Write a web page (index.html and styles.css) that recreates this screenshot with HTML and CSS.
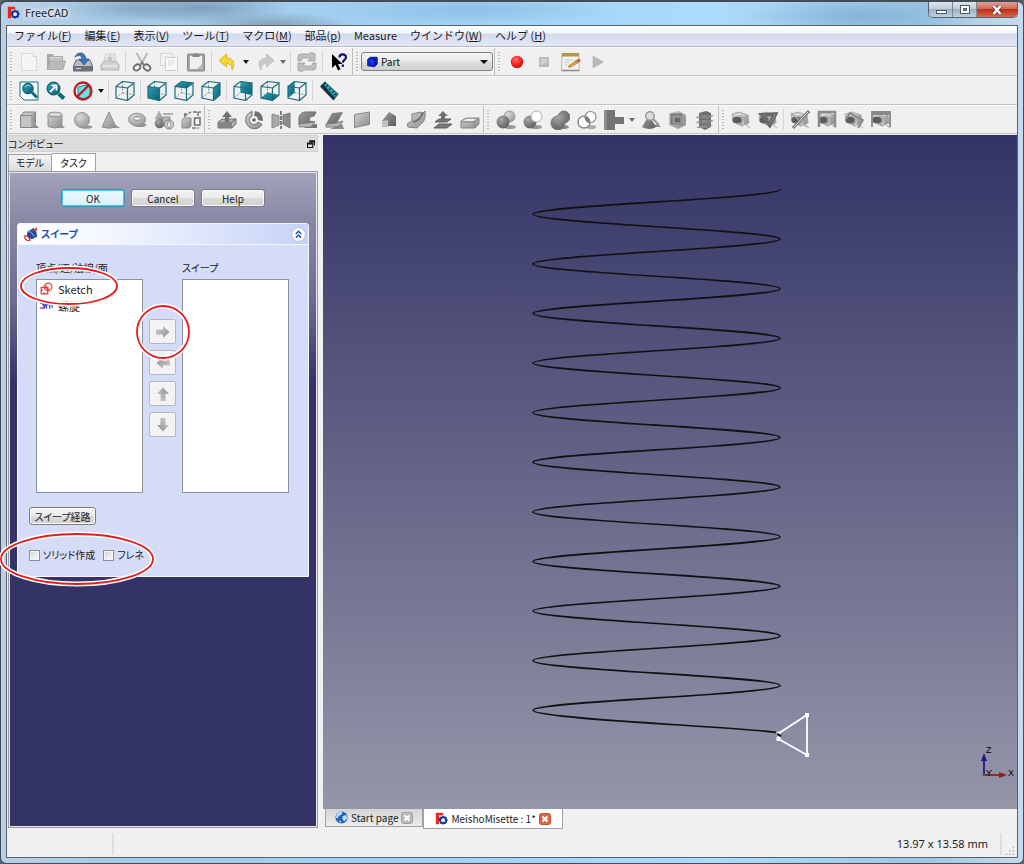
FILE: index.html
```html
<!DOCTYPE html>
<html lang="ja">
<head>
<meta charset="utf-8">
<title>FreeCAD</title>
<link rel="stylesheet" href="styles.css">
</head>
<body>
<svg class="defs" aria-hidden="true">
  <defs>
    <linearGradient id="gy" x1="0" y1="0" x2="1" y2="1"><stop offset="0" stop-color="#d2d2d2"/><stop offset="1" stop-color="#8c8c8c"/></linearGradient>
    <linearGradient id="dk" x1="0" y1="0" x2="1" y2="1"><stop offset="0" stop-color="#9c9c9c"/><stop offset="1" stop-color="#5e5e5e"/></linearGradient>
    <linearGradient id="teal" x1="0" y1="0" x2="1" y2="1"><stop offset="0" stop-color="#2aa0b4"/><stop offset="1" stop-color="#0b6075"/></linearGradient>
    <radialGradient id="ball" cx=".35" cy=".3" r=".8"><stop offset="0" stop-color="#dadada"/><stop offset="1" stop-color="#969696"/></radialGradient>
    <radialGradient id="dball" cx=".35" cy=".3" r=".8"><stop offset="0" stop-color="#a8a8a8"/><stop offset="1" stop-color="#595959"/></radialGradient>
    <radialGradient id="redball" cx=".4" cy=".3" r=".8"><stop offset="0" stop-color="#ff6a6a"/><stop offset=".6" stop-color="#f01818"/><stop offset="1" stop-color="#c40b0b"/></radialGradient>
  </defs>
  <symbol id="logo" viewBox="0 0 16 16"><path d="M1 1h9v3H5v3h3v3H5v5H1z" fill="#ef2518"/><circle cx="10" cy="10" r="3.600" fill="none" stroke="#153c9d" stroke-width="2.600"/><path d="M10 4.500v2M10 13.500v2M4.500 10h2M13.500 10h2M6.100 6.100l1.500 1.500M12.400 12.400l1.500 1.500M13.900 6.100l-1.500 1.500M6.100 13.900l1.500-1.500" stroke="#153c9d" stroke-width="2"/><circle cx="10" cy="10" r="2.100" fill="#e7eefb"/></symbol>
  <symbol id="new" viewBox="0 0 20 20"><path d="M2.500 1.500h12l3 3v14h-15z" fill="#f5f5f5" stroke="#dadada"/><path d="M14.500 1.500v3h3" fill="#fff" stroke="#d0d0d0"/></symbol>
  <symbol id="open" viewBox="0 0 20 20"><path d="M1 17V2h6l1 2h9v13z" fill="#a8a8a8"/><path d="M4 5h12v8H4z" fill="#d8d8d8"/><path d="M5 7h11" stroke="#aaa"/><path d="M1 17.500L3.500 9h16L17 17.500z" fill="#b9b9b9" stroke="#9b9b9b" stroke-width=".7"/></symbol>
  <symbol id="save" viewBox="0 0 20 20"><path d="M3 8h14l2.500 6v5H.5v-5z" fill="#b9bdc4" stroke="#65696f"/><path d="M1 14h18v5H1z" fill="#6d7177"/><path d="M3 16.500h5" stroke="#d5d8dc"/><path d="M2 5C4-.5 12-1 13 7h3l-5 6-5-6h3C9 3.500 6 2.500 2 5z" fill="#3d72b8" stroke="#1e4d8f" stroke-width=".7"/></symbol>
  <symbol id="print" viewBox="0 0 20 20"><path d="M5 2h10v8H5z" fill="#ececec" stroke="#cfcfcf"/><path d="M10 3v5M7.500 5.500L10 8l2.500-2.500" stroke="#bcbcbc" fill="none" stroke-width="1.500"/><path d="M1 13l3-4h12l3 4v5H1z" fill="#d0d0d0" stroke="#b5b5b5"/><path d="M3 14h14" stroke="#eee" stroke-width="1.500"/></symbol>
  <symbol id="cut" viewBox="0 0 20 20"><path d="M4.500 1L12 14M15.500 1L8 14" stroke="#b7b7b7" stroke-width="2"/><ellipse cx="5" cy="15.500" rx="3.600" ry="2.700" fill="none" stroke="#6d6d6d" stroke-width="1.800" transform="rotate(-35 5 15.500)"/><ellipse cx="15" cy="15.500" rx="3.600" ry="2.700" fill="none" stroke="#6d6d6d" stroke-width="1.800" transform="rotate(35 15 15.500)"/><path d="M8 13l2-3 2 3" stroke="#777" fill="none" stroke-width="1.500"/></symbol>
  <symbol id="copy" viewBox="0 0 20 20"><path d="M1.500 1.500h12v12h-12z" fill="#f2f2f2" stroke="#d3d3d3"/><path d="M6.500 5.500h12v13h-12z" fill="#f8f8f8" stroke="#cfcfcf"/><path d="M4 5h6M9 9h7M9 11h7M9 13h5" stroke="#ddd"/></symbol>
  <symbol id="paste" viewBox="0 0 20 20"><rect x="1.500" y="2" width="17" height="17" rx="1" fill="#a6a6a6" stroke="#878787"/><path d="M4 4h12v13H4z" fill="#f0f0f0"/><path d="M6.500 5V2.500h2L10 .5l1.500 2h2V5z" fill="#858585"/><path d="M16 12v5h-5z" fill="#bdbdbd"/></symbol>
  <symbol id="undo" viewBox="0 0 20 20"><path d="M1 8.500L8.500 2v4C15 6 18 11 14 18c0-4-1-6.500-5.500-6.500V15z" fill="#f6d72c" stroke="#cda913" stroke-width=".8"/></symbol>
  <symbol id="redo" viewBox="0 0 20 20"><path d="M19 8.500L11.500 2v4C5 6 2 11 6 18c0-4 1-6.500 5.500-6.500V15z" fill="#c9c9c9" stroke="#b9b9b9" stroke-width=".8"/></symbol>
  <symbol id="refresh" viewBox="0 0 20 20"><path d="M1 9V5q0-3 3-3h8l2-1.500 4 1V9h-7l2.500-3H5.500L4 9zM19 11v4q0 3-3 3H7l-2 1.500-4-1V11h7l-2.500 3h9L16 11z" fill="#bfbfbf" stroke="#9d9d9d" stroke-width=".8"/></symbol>
  <symbol id="whats" viewBox="0 0 20 20"><path d="M3 2v14l3.500-3.200L9 18.500l2.500-1.200L9 12h4.500z" fill="#000"/><path d="M10.500 5.500C10.500 1.500 17 1.500 17 5.200c0 2.800-3.200 2.600-3.200 5.600" fill="none" stroke="#10107e" stroke-width="2.200"/><path d="M12.700 12.500h2.300v2.300h-2.300z" fill="#10107e"/></symbol>
  <symbol id="bluecube" viewBox="0 0 14 14"><path d="M2 4l3-2.500h8v8L10 12.500 2 11.500z" fill="#0a22df" stroke="#04106a"/><path d="M2 4h7.500v8" fill="#1b3cff" stroke="#04106a" stroke-width=".6"/><path d="M9.500 4L13 1.500v8l-3.500 3z" fill="#0717a6"/></symbol>
  <symbol id="rec" viewBox="0 0 20 20"><circle cx="10" cy="10" r="6.200" fill="url(#redball)"/></symbol>
  <symbol id="stop" viewBox="0 0 20 20"><path d="M5 5h10v10H5z" fill="#b9b9b9"/><path d="M6.500 6.500h7v4l-7 3z" fill="#cfcfcf"/></symbol>
  <symbol id="edit" viewBox="0 0 20 20"><path d="M1 2.500h17v16H.5z" fill="#f3f3f1" stroke="#b5b5b0"/><path d="M1 1h17v3.500H1z" fill="#b59a3c"/><path d="M1 18.500h17" stroke="#898989" stroke-width="1.500"/><path d="M3.500 8h8M3.500 10.500h5M3.500 13h3" stroke="#c8c8c8"/><path d="M7 14.500l8-6 2 2.300-8 4.600z" fill="#e4a238" stroke="#99651b" stroke-width=".6"/><path d="M15 8.500l3-2 1.800 2.200L17 10.800z" fill="#d45142"/></symbol>
  <symbol id="play" viewBox="0 0 20 20"><path d="M5 4l10.500 6L5 16z" fill="#bababa" stroke="#aaa" stroke-width=".5"/></symbol>
  <symbol id="fit" viewBox="0 0 20 20"><path d="M1 1h18v18H5l-4-4z" fill="#f5fcfd" stroke="#176f80"/><circle cx="9" cy="7.500" r="5.300" fill="url(#teal)" stroke="#0b5264"/><path d="M13 11.500l5 5" stroke="#106a7c" stroke-width="3"/><path d="M6 6q2-3 5-1" stroke="#9ee1ec" fill="none"/></symbol>
  <symbol id="fitsel" viewBox="0 0 20 20"><circle cx="7.500" cy="7.500" r="6.500" fill="url(#teal)" stroke="#0b5264"/><path d="M12.500 12.500l5.500 5" stroke="#106a7c" stroke-width="4"/><path d="M4 11l5-5M5.500 4.500h5v5" stroke="#fff" fill="none" stroke-width="1.800"/></symbol>
  <symbol id="draw" viewBox="0 0 20 20"><path d="M5 6l8-2 4 3v8l-7 3-5-3z" fill="#6ce1e4" stroke="#1b8d92"/><circle cx="10" cy="10" r="8.500" fill="none" stroke="#bd1c24" stroke-width="2.300"/><path d="M4 16L16 4" stroke="#bd1c24" stroke-width="2.300"/></symbol>
  <symbol id="c-axo" viewBox="0 0 20 20"><g id="wire"><path d="M1 5.500L12.500 7v12.500L1 17zM1 5.500L7.500.5 19 2l-6.500 5M19 2v12l-6.500 5.500" fill="none" stroke="#1d6e7d" stroke-width="1.200"/><path d="M7.500.5v11L1 17M7.500 11.500L19 14" fill="none" stroke="#3c8290" stroke-dasharray="2 1.500" stroke-width=".8"/></g></symbol>
  <symbol id="c-front" viewBox="0 0 20 20"><path d="M1 5.500L12.500 7v12.500L1 17z" fill="url(#teal)"/><use href="#wire"/></symbol>
  <symbol id="c-top" viewBox="0 0 20 20"><path d="M1 5.500L7.500.5 19 2l-6.500 5z" fill="url(#teal)"/><use href="#wire"/></symbol>
  <symbol id="c-right" viewBox="0 0 20 20"><path d="M12.500 7L19 2v12l-6.500 5.500z" fill="url(#teal)"/><use href="#wire"/></symbol>
  <symbol id="c-rear" viewBox="0 0 20 20"><path d="M7.500.5L19 2v12L7.500 11.500z" fill="url(#teal)"/><use href="#wire"/></symbol>
  <symbol id="c-bottom" viewBox="0 0 20 20"><path d="M1 17l6.500-5.500L19 14l-6.500 5.500z" fill="url(#teal)"/><use href="#wire"/></symbol>
  <symbol id="c-left" viewBox="0 0 20 20"><path d="M1 5.500L7.500.5v11L1 17z" fill="url(#teal)"/><use href="#wire"/></symbol>
  <symbol id="ruler" viewBox="0 0 20 20"><path d="M1 5.500L6 .5l13.500 12.500-5 6.500z" fill="#12343c"/><path d="M5 4L7 2l11.500 11-3 3.500z" fill="#27a5b8"/><path d="M7 6l2-2M10 9l2-2M13 12l2-2M15 14.500l2-2" stroke="#0c4450" stroke-width="1.200"/></symbol>
  <symbol id="box" viewBox="0 0 20 20"><path d="M10 18h10l-4-4z" fill="#8b8b8b"/><path d="M1.500 5.500L5 2h11.500v12L13 17.500H1.500z" fill="#c4c4c4" stroke="#858585"/><path d="M1.500 5.500H13v12M13 5.500L16.500 2" fill="none" stroke="#858585"/><path d="M13.500 6l2.500-2.500v10l-2.500 3z" fill="#999"/></symbol>
  <symbol id="cyl" viewBox="0 0 20 20"><path d="M8 18h11l-3-3z" fill="#999"/><path d="M2 4.500v12Q9 19.500 16 16.500v-12" fill="url(#gy)" stroke="#909090"/><ellipse cx="9" cy="4.500" rx="7" ry="2.300" fill="#d8d8d8" stroke="#909090"/></symbol>
  <symbol id="sph" viewBox="0 0 20 20"><ellipse cx="13" cy="17" rx="6.500" ry="1.800" fill="#999"/><circle cx="9" cy="10" r="7.500" fill="url(#ball)" stroke="#949494"/></symbol>
  <symbol id="cone" viewBox="0 0 20 20"><path d="M7 18h13l-4-3z" fill="#949494"/><path d="M9 2L2 17q7 2.500 14 0z" fill="url(#gy)" stroke="#8b8b8b"/></symbol>
  <symbol id="torus" viewBox="0 0 20 20"><ellipse cx="13" cy="15" rx="6.500" ry="2" fill="#909090"/><ellipse cx="10" cy="9.500" rx="8.500" ry="6.300" fill="url(#ball)" stroke="#929292"/><ellipse cx="10" cy="8.500" rx="4" ry="1.900" fill="#efefef" stroke="#8b8b8b"/></symbol>
  <symbol id="prims" viewBox="0 0 20 20"><path d="M5 1L1 9h8z" fill="url(#gy)" stroke="#999" stroke-width=".5"/><path d="M9 4h10" stroke="#999" stroke-width="1.500"/><circle cx="5.500" cy="13.500" r="4.800" fill="url(#dball)"/><path d="M9 7h7v7H9z" fill="url(#gy)" stroke="#888"/><circle cx="15" cy="14.500" r="4.500" fill="#ddd" stroke="#777"/><ellipse cx="15" cy="14.500" rx="2" ry="3" fill="#eee" stroke="#888"/></symbol>
  <symbol id="builder" viewBox="0 0 20 20"><path d="M1 10l2-2h7v8l-2 2H1z" fill="url(#gy)" stroke="#8b8b8b"/><path d="M13.500 8h5.500v7h-5.500z" fill="#f6f6f6" stroke="#6d6d6d" stroke-width="1.500"/><path d="M12 2h8M3 6l7-4M4 3v4M17 2v4M11 18h7" stroke="#777" stroke-width="1.500" stroke-dasharray="4 1.500"/></symbol>
  <symbol id="extrude" viewBox="0 0 20 20"><path d="M1 12l4-3h14v5l-4 4H1z" fill="#b0b0b0" stroke="#707070"/><path d="M1 12h14v6H1z" fill="#858585"/><path d="M15 12l4-3" stroke="#666"/><path d="M8 12V7H5l5-6 5 6h-3v5z" fill="#737373"/></symbol>
  <symbol id="revolve" viewBox="0 0 20 20"><path d="M8 1.500A8.800 8.800 0 1 0 18 14.500l-4-2.500a4.500 4.500 0 1 1-6-6z" fill="url(#gy)" stroke="#707070"/><path d="M11 1q8 1 8 10l-5-1q0-4-4-4z" fill="#707070"/><circle cx="10" cy="10" r="1.800" fill="#666"/></symbol>
  <symbol id="mirror" viewBox="0 0 20 20"><path d="M1 4l7 2v9l-7 3z" fill="#a9a9a9" stroke="#888"/><path d="M19 3l-7 2v9l7 4z" fill="#8e8e8e" stroke="#777"/><path d="M10 1v18" stroke="#555" stroke-width="1.500" stroke-dasharray="4 1"/></symbol>
  <symbol id="fillet" viewBox="0 0 20 20"><path d="M6 18h13v-4l-8 1z" fill="#777"/><path d="M1 8Q2 2 8 2h10l-2 4q-5 0-5 5l6 1-4 5-12-2z" fill="url(#dk)" stroke="#6b6b6b"/><path d="M1 14l9-1 7-1-4 5H1z" fill="#b6b6b6" stroke="#777" stroke-width=".7"/></symbol>
  <symbol id="chamfer" viewBox="0 0 20 20"><path d="M5 19h14l-2-5z" fill="#888"/><path d="M1 14L7 3l11-1-6 11z" fill="url(#dk)"/><path d="M1 14l10-1 7-2-5 6H1z" fill="#b4b4b4" stroke="#777"/></symbol>
  <symbol id="ruled" viewBox="0 0 20 20"><path d="M2.500 4.500L17.500 2v12.500l-15 3z" fill="url(#gy)" stroke="#888"/></symbol>
  <symbol id="loft" viewBox="0 0 20 20"><path d="M3 11l7-9 7 4v10l-7 0-7 1z" fill="url(#dk)"/><path d="M3 11l6-1v6.500l-6 .5z" fill="#c0c0c0"/></symbol>
  <symbol id="sweep" viewBox="0 0 20 20"><path d="M1 14l5-3V4l9-2 1 3 3-4q1 9-3 12l-5 5-9-1z" fill="url(#gy)" stroke="#848484"/><path d="M7 12q7-1 10-10" stroke="#6b6b6b" fill="none" stroke-width="1.500"/></symbol>
  <symbol id="offset" viewBox="0 0 20 20"><path d="M10 1l5 5h-3v3H8V6H5z" fill="#717171"/><path d="M2 12l4-3h12l-4 3zM1 18l5-4h13l-5 4z" fill="#777" stroke="#5e5e5e"/></symbol>
  <symbol id="thick" viewBox="0 0 20 20"><path d="M1 11l5-3h13v6l-4 4H1z" fill="url(#gy)" stroke="#888"/><path d="M1 12h14v6M15 12l4-4" fill="none" stroke="#888"/><path d="M4 11l3-2h9l-3 2z" fill="#eee"/></symbol>
  <symbol id="bool" viewBox="0 0 20 20"><ellipse cx="14" cy="17" rx="6" ry="2" fill="#999"/><circle cx="13.500" cy="6.500" r="5.500" fill="url(#ball)" stroke="#999"/><circle cx="7" cy="12" r="6.500" fill="url(#dball)"/></symbol>
  <symbol id="subtract" viewBox="0 0 20 20"><ellipse cx="13" cy="17" rx="6" ry="2" fill="#999"/><circle cx="7" cy="12" r="6.500" fill="url(#dball)"/><circle cx="13.500" cy="6.500" r="5.500" fill="#fff" stroke="#aaa"/></symbol>
  <symbol id="union" viewBox="0 0 20 20"><ellipse cx="13" cy="17" rx="6" ry="2" fill="#888"/><path d="M8 6a6 6 0 1 1 7 7 7 7 0 1 1-7-7z" fill="url(#dball)" stroke="#777"/></symbol>
  <symbol id="common" viewBox="0 0 20 20"><ellipse cx="14" cy="17" rx="5" ry="2" fill="#aaa"/><g fill="#fff" stroke="#888" stroke-width="1.200"><circle cx="7" cy="12" r="6"/><circle cx="13.500" cy="7" r="5.500"/></g><path d="M8 7q3-2 5 4l-1 2q-4-1-4-6z" fill="#777"/><circle cx="7" cy="12" r="6" fill="none" stroke="#888"/></symbol>
  <symbol id="connect" viewBox="0 0 20 20"><path d="M0 0h11v7h9v7h-9v6H0z" fill="#747474"/><path d="M0 0h3v20H0z" fill="#8b8b8b"/></symbol>
  <symbol id="check" viewBox="0 0 20 20"><path d="M9 17h11l-4-3z" fill="#888"/><path d="M8 5L1 17q8 4 14 0z" fill="url(#dk)"/><circle cx="9" cy="6" r="4.300" fill="#ddd" stroke="#999" stroke-width="1.500"/><path d="M12 9l6 6" stroke="#999" stroke-width="2"/></symbol>
  <symbol id="defeat" viewBox="0 0 20 20"><path d="M1 3l10-2 7 4v10l-8 4-9-4z" fill="url(#gy)"/><path d="M3 4h11v10H3z" fill="#8a8a8a" stroke="#707070"/><path d="M6 7h7v6H6z" fill="#666" stroke="#aaa"/><path d="M14 4l4 2v9l-4 2z" fill="#999"/></symbol>
  <symbol id="section" viewBox="0 0 20 20"><path d="M4 3l7-2 5 2v14l-6 3-6-3z" fill="#6d6d6d"/><path d="M0 8l5-3h14l-5 4zM0 13l5-3h14l-5 4zM1 18l4-3h13l-4 3z" fill="#8e8e8e" opacity=".8"/><path d="M6 4v12M13 5v13" stroke="#777" stroke-width="1.500"/></symbol>
  <symbol id="m-lin" viewBox="0 0 20 20"><g id="measure"><path d="M1 4l7-2 9 3 1 8-7 3-9-4z" fill="url(#gy)" stroke="#a5a5a5" stroke-width=".8"/><ellipse cx="6" cy="10" rx="4.500" ry="3.300" fill="#5c5c5c"/><path d="M4 5l6-1 4 2" stroke="#eee" fill="none"/><path d="M13 7v8l-3 1zM14 14l5 4" fill="#d8d8d8" stroke="#aaa"/></g></symbol>
  <symbol id="m-ang" viewBox="0 0 20 20"><use href="#measure"/><path d="M2 4l17-1-7 14zM6 6l5 8 4-9z" fill="none" stroke="#686868" stroke-width="2"/></symbol>
  <symbol id="m-clear" viewBox="0 0 20 20"><use href="#measure"/><path d="M1 3l16 14" stroke="#aaa" stroke-width="1.500"/><path d="M3 18L19 1" stroke="#777" stroke-width="3"/><path d="M4 17L18 2" stroke="#eee"/></symbol>
  <symbol id="m-all" viewBox="0 0 20 20"><use href="#measure"/><path d="M2 17V2h16v15" fill="none" stroke="#8b8b8b" stroke-width="2.500"/></symbol>
  <symbol id="m-3d" viewBox="0 0 20 20"><use href="#measure"/><path d="M2 9l4-6 13 7-5 8" fill="none" stroke="#8b8b8b" stroke-width="2"/></symbol>
  <symbol id="m-delta" viewBox="0 0 20 20"><use href="#measure"/><path d="M1 17V2h18v15M1 4h18" fill="none" stroke="#888" stroke-width="1.800"/></symbol>
  <symbol id="arrow" viewBox="0 0 16 16"><path d="M1 5.500h7V2l6.500 6L8 14v-3.500H1z" fill="url(#gy)"/></symbol>
  <symbol id="sweepc" viewBox="0 0 16 16"><path d="M4 5l7-4 3 4 1 6-6 3-6-3z" fill="#204a9c"/><path d="M4 5q5 0 8 6" stroke="#6d96dc" fill="none" stroke-width="1.500"/><path d="M1 10l4 1 2 4-3 1-3-3z" fill="#fff" stroke="#dc2034" stroke-width="1.300"/><path d="M11 4l4-4v4z" fill="#e63846"/><path d="M8 4q5 2 6-3" fill="none" stroke="#e63846"/></symbol>
  <symbol id="sketch" viewBox="0 0 16 16"><path d="M1.500 6.500h8v8h-8z" fill="#fff" stroke="#df4438" stroke-width="1.500"/><circle cx="10" cy="6" r="4.700" fill="none" stroke="#df4438" stroke-width="1.500"/><path d="M7.500 3.500v5h5M1 10h3M5 12v3" stroke="#b63a33" fill="none"/></symbol>
  <symbol id="helix" viewBox="0 0 16 16"><path d="M0 5h4v2h4M0 11h5v-2h3" fill="none" stroke="#e04356" stroke-width="2"/><path d="M5 3v9M8 3v9M12 3v9M15 4v7M3 7h12" stroke="#3653e0" stroke-width="1.500"/></symbol>
  <symbol id="globe" viewBox="0 0 14 14"><circle cx="7" cy="7" r="6.500" fill="#2263b8"/><path d="M2 3q3-3 6-2L7 4 4 5 3 8 1 7zM8 6l4-2 1 4-3 3-2-2zM4 10l3 1-1 2z" fill="#bfe0ff"/></symbol>
</svg>

<div class="window">
  <header class="titlebar">
    <svg class="logo"><use href="#logo"/></svg><span class="caption">FreeCAD</span>
    <div class="winbtns">
      <button aria-label="最小化"><svg viewBox="0 0 24 16"><rect x="7.500" y="8.500" width="10" height="3" fill="#fff" stroke="#4e5968"/></svg></button>
      <button aria-label="最大化"><svg viewBox="0 0 24 16"><rect x="7.500" y="3.500" width="9" height="8" fill="#fff" stroke="#4e5968"/><rect x="10.500" y="6.500" width="3" height="2" fill="#8da0b5" stroke="#4e5968"/></svg></button>
      <button class="close" aria-label="閉じる"><svg viewBox="0 0 24 16"><path d="M8.500 4l7 8M15.500 4l-7 8" stroke="#6b3030" stroke-width="4"/><path d="M8.500 4l7 8M15.500 4l-7 8" stroke="#fff" stroke-width="2.500"/></svg></button>
    </div>
  </header>
  <div class="client">
    <nav class="menubar">
      <a href="#">ファイル(<u>F</u>)</a><a href="#">編集(<u>E</u>)</a><a href="#">表示(<u>V</u>)</a><a href="#">ツール(<u>T</u>)</a><a href="#">マクロ(<u>M</u>)</a><a href="#">部品(<u>p</u>)</a><a href="#">Measure</a><a href="#">ウインドウ(<u>W</u>)</a><a href="#">ヘルプ (<u>H</u>)</a>
    </nav>
    <div class="toolrow">
      <div class="toolbar">
        <button aria-label="新規"><svg><use href="#new"/></svg></button><button aria-label="開く"><svg><use href="#open"/></svg></button><button aria-label="保存"><svg><use href="#save"/></svg></button><button aria-label="印刷"><svg><use href="#print"/></svg></button><i class="sep"></i>
        <button aria-label="切り取り"><svg><use href="#cut"/></svg></button><button aria-label="コピー"><svg><use href="#copy"/></svg></button><button aria-label="貼り付け"><svg><use href="#paste"/></svg></button><i class="sep"></i>
        <button aria-label="元に戻す"><svg><use href="#undo"/></svg></button><button class="drop" aria-label="履歴"></button><button aria-label="やり直す"><svg><use href="#redo"/></svg></button><button class="drop dim" aria-label="やり直し履歴"></button><i class="sep"></i>
        <button aria-label="更新"><svg><use href="#refresh"/></svg></button><i class="sep"></i><button aria-label="これは何?"><svg><use href="#whats"/></svg></button>
      </div>
      <div class="toolbar combo">
        <svg class="cube"><use href="#bluecube"/></svg>
        <select aria-label="ワークベンチ"><option>Part</option></select>
      </div>
      <div class="toolbar">
        <button aria-label="記録"><svg><use href="#rec"/></svg></button><button aria-label="停止"><svg><use href="#stop"/></svg></button><button aria-label="マクロ編集"><svg><use href="#edit"/></svg></button><button aria-label="実行"><svg><use href="#play"/></svg></button>
      </div>
    </div>
    <div class="toolrow">
      <div class="toolbar">
        <button aria-label="全てにフィット"><svg><use href="#fit"/></svg></button><button aria-label="選択にフィット"><svg><use href="#fitsel"/></svg></button><button aria-label="描画スタイル"><svg><use href="#draw"/></svg></button><button class="drop" aria-label="スタイル一覧"></button><i class="sep"></i>
        <button aria-label="アクソメトリック"><svg><use href="#c-axo"/></svg></button><i class="sep"></i>
        <button aria-label="正面"><svg><use href="#c-front"/></svg></button><button aria-label="上面"><svg><use href="#c-top"/></svg></button><button aria-label="右面"><svg><use href="#c-right"/></svg></button><i class="sep"></i>
        <button aria-label="背面"><svg><use href="#c-rear"/></svg></button><button aria-label="底面"><svg><use href="#c-bottom"/></svg></button><button aria-label="左面"><svg><use href="#c-left"/></svg></button><i class="sep"></i>
        <button aria-label="距離を測定"><svg><use href="#ruler"/></svg></button>
      </div>
    </div>
    <div class="toolrow">
      <div class="toolbar">
        <button aria-label="直方体"><svg><use href="#box"/></svg></button><button aria-label="円柱"><svg><use href="#cyl"/></svg></button><button aria-label="球"><svg><use href="#sph"/></svg></button><button aria-label="円錐"><svg><use href="#cone"/></svg></button><button aria-label="トーラス"><svg><use href="#torus"/></svg></button><button aria-label="プリミティブ"><svg><use href="#prims"/></svg></button><button aria-label="シェイプビルダー"><svg><use href="#builder"/></svg></button>
      </div>
      <div class="toolbar">
        <button aria-label="押し出し"><svg><use href="#extrude"/></svg></button><button aria-label="回転"><svg><use href="#revolve"/></svg></button><button aria-label="鏡像"><svg><use href="#mirror"/></svg></button><button aria-label="フィレット"><svg><use href="#fillet"/></svg></button><button aria-label="面取り"><svg><use href="#chamfer"/></svg></button><button aria-label="線織面"><svg><use href="#ruled"/></svg></button><button aria-label="ロフト"><svg><use href="#loft"/></svg></button><button aria-label="スイープ"><svg><use href="#sweep"/></svg></button><button aria-label="オフセット"><svg><use href="#offset"/></svg></button><button aria-label="厚み"><svg><use href="#thick"/></svg></button>
      </div>
      <div class="toolbar">
        <button aria-label="ブーリアン"><svg><use href="#bool"/></svg></button><button aria-label="切り取り"><svg><use href="#subtract"/></svg></button><button aria-label="結合"><svg><use href="#union"/></svg></button><button aria-label="共通集合"><svg><use href="#common"/></svg></button><button aria-label="接続"><svg><use href="#connect"/></svg></button><button class="drop dim" aria-label="接続一覧"></button><button aria-label="チェック"><svg><use href="#check"/></svg></button><button aria-label="断面"><svg><use href="#defeat"/></svg></button><button aria-label="複数断面"><svg><use href="#section"/></svg></button>
      </div>
      <div class="toolbar">
        <button aria-label="直線測定"><svg><use href="#m-lin"/></svg></button><button aria-label="角度測定"><svg><use href="#m-ang"/></svg></button><i class="sep"></i><button aria-label="全クリア"><svg><use href="#m-clear"/></svg></button><button aria-label="全て切り替え"><svg><use href="#m-all"/></svg></button><button aria-label="3D切り替え"><svg><use href="#m-3d"/></svg></button><button aria-label="差分切り替え"><svg><use href="#m-delta"/></svg></button>
      </div>
    </div>

    <main class="work">
      <aside class="dock">
        <div class="docktitle"><span>コンボビュー</span><button aria-label="フロート"><svg viewBox="0 0 9 9"><path d="M2.500 1h6v5M2.500 2h6M.5 3.500h6v5h-6zM.5 4.500h6" fill="none" stroke="#111" stroke-width="1.300"/></svg></button></div>
        <div class="tabs"><button>モデル</button><button class="on">タスク</button></div>
        <div class="pane">
          <div class="actions"><button class="btn primary">OK</button><button class="btn">Cancel</button><button class="btn">Help</button></div>
          <section class="card">
            <header><svg class="cardicon"><use href="#sweepc"/></svg><h2>スイープ</h2><button class="fold" aria-label="折りたたむ"><svg viewBox="0 0 14 14"><circle cx="7" cy="7" r="6.500" fill="#fff" stroke="#b8c4e8"/><path d="M4.500 6.500L7 4l2.500 2.500M4.500 10L7 7.500 9.500 10" fill="none" stroke="#1c4fb0" stroke-width="1.400"/></svg></button></header>
            <div class="cardbody">
              <div class="lists">
                <div class="col"><span>頂点/辺/法線/面</span><ul class="list"><li><svg><use href="#sketch"/></svg>Sketch</li><li><svg><use href="#helix"/></svg>螺旋</li></ul></div>
                <div class="moves">
                  <button aria-label="追加"><svg><use href="#arrow"/></svg></button><button aria-label="削除"><svg class="left"><use href="#arrow"/></svg></button><button aria-label="上へ"><svg class="up"><use href="#arrow"/></svg></button><button aria-label="下へ"><svg class="down"><use href="#arrow"/></svg></button>
                </div>
                <div class="col"><span>スイープ</span><ul class="list"></ul></div>
              </div>
              <button class="btn path">スイープ経路</button>
              <div class="checks"><label><input type="checkbox">ソリッド作成</label><label><input type="checkbox">フレネ</label></div>
            </div>
          </section>
        </div>
      </aside>
      <section class="mdi">
        <div class="view">
          <svg class="scene" viewBox="323 135 694 674" role="img" aria-label="螺旋">
            <path fill="none" stroke="#111" stroke-width="1.600" d="M780 189.500c0 9-247 15.800-247 24.800s247 15.800 247 24.800s-247 15.800-247 24.800s247 15.800 247 24.800s-247 15.800-247 24.800s247 15.800 247 24.800s-247 15.800-247 24.800s247 15.800 247 24.800s-247 15.800-247 24.800s247 15.800 247 24.800s-247 15.800-247 24.800s247 15.800 247 24.800s-247 15.800-247 24.800s247 15.800 247 24.800s-247 15.800-247 24.800s247 15.800 247 24.800s-247 15.800-247 24.800s247 15.800 247 24.800s-247 15.800-247 24.800s247 15.800 247 24.800s-247 15.800-247 24.800c0 9 230 17.500 247 22.800"/>
            <path d="M778.500 733.500L807 715v40l-28.500-16z" fill="none" stroke="#fff" stroke-width="1.800"/>
            <path d="M776.500 731.500h4v4h-4zM776.500 737h4v4h-4zM805 713h4v4h-4zM805 753h4v4h-4z" fill="#fff"/>
            <path d="M777 734l4 2" stroke="#111" stroke-width="2"/>
          </svg>
          <svg class="axes" viewBox="0 0 40 40" aria-hidden="true"><path d="M10 31V17" stroke="#1b1b94" stroke-width="1.800"/><path d="M7 17l3-8 3 8z" fill="#1b1b94"/><path d="M10 31h17" stroke="#981b1b" stroke-width="1.800"/><path d="M25 28l8 3-8 3z" fill="#981b1b"/><circle cx="10" cy="31" r="1.500" fill="#1a7a2b"/><text x="12" y="9">Z</text><text x="12" y="32">Y</text><text x="34" y="32">X</text></svg>
        </div>
        <div class="doctabs">
          <button><svg><use href="#globe"/></svg>Start page<svg class="x" viewBox="0 0 12 12"><rect x=".5" y=".5" width="11" height="11" rx="2" fill="#bcbcbc" stroke="#a0a0a0"/><path d="M3.500 3.500l5 5M8.500 3.500l-5 5" stroke="#fff" stroke-width="2"/></svg></button>
          <button class="on"><svg><use href="#logo"/></svg>MeishoMisette : 1*<svg class="x" viewBox="0 0 12 12"><rect x=".5" y=".5" width="11" height="11" rx="2" fill="#df6547" stroke="#c34e33"/><path d="M3.500 3.500l5 5M8.500 3.500l-5 5" stroke="#fff" stroke-width="2"/></svg></button>
        </div>
      </section>
    </main>
    <footer class="status"><span class="msg"></span><span class="dim-info">13.97 x 13.58 mm</span><svg class="grip" viewBox="0 0 12 12"><path d="M9 2h2v2H9zM9 6h2v2H9zM9 10h2v2H9zM5 6h2v2H5zM5 10h2v2H5zM1 10h2v2H1z" fill="#c3c3c3"/></svg></footer>
  </div>
</div>
<svg class="annot" viewBox="0 0 200 600" aria-hidden="true">
  <g fill="none" stroke="#fff" stroke-width="5"><ellipse cx="69" cy="286" rx="48" ry="18"/><circle cx="163" cy="332" r="26"/><ellipse cx="77" cy="559" rx="76" ry="25"/></g>
  <g fill="none" stroke="#e81c1c" stroke-width="1.800"><ellipse cx="69" cy="286" rx="48" ry="18"/><circle cx="163" cy="332" r="26"/><ellipse cx="77" cy="559" rx="76" ry="25"/></g>
</svg>
</body>
</html>
```
FILE: styles.css
```css
* { box-sizing: border-box; }
body { margin: 0; background: #5b6470; color: #1b1b1b; font: 11px/16px "Noto Sans CJK JP", sans-serif; }
button { margin: 0; padding: 0; border: 0; background: none; font: inherit; color: inherit; }
svg { display: block; flex: none; }
.defs { position: absolute; width: 0; height: 0; }

.window {
  display: flex; flex-direction: column; height: 100vh; padding: 0 5px 5px;
  border: 1px solid #454b54; border-top-width: 2px; border-radius: 7px 7px 6px 6px;
  background:
    radial-gradient(ellipse 90px 16px at 200px 6px, #7d9fba 0, transparent 100%),
    radial-gradient(ellipse 80px 12px at 270px 22px, #86a3b9 0, transparent 100%),
    radial-gradient(ellipse 70px 14px at 130px 6px, #8badc6 0, transparent 100%),
    radial-gradient(ellipse 150px 14px at 470px 8px, #8fc0e6 0, transparent 100%),
    radial-gradient(ellipse 120px 20px at 860px 14px, #86b4d8 0, transparent 100%),
    linear-gradient(90deg, #b9d0e6, #a8cbe6 10%, #a0d0f3 40%, #acdcfb 70%, #9fc6e2 90%, #c5dbee);
}
.titlebar { display: flex; align-items: flex-start; height: 23px; padding-left: 1px; }
.logo { width: 13px; height: 13px; margin: 4px 5px 0 0; }
.caption { flex: 1; margin-top: 2px; text-shadow: 0 0 5px #fff, 0 0 5px #fff; }
.winbtns { display: flex; border: 1px solid #59636f; border-top: 0; border-radius: 0 0 5px 5px; overflow: hidden; }
.winbtns button { width: 24px; height: 15px; border-right: 1px solid #7d8996; background: linear-gradient(#dce6ef, #bcc9d6 50%, #9db0c2 50%, #bfd1e0); }
.winbtns .close { width: 40px; border: 0; background: linear-gradient(#e0a196, #cf6551 50%, #bb3018 50%, #d66b49); }
.winbtns svg { width: 24px; height: 16px; margin: auto; }

.client { display: flex; flex-direction: column; flex: 1; min-height: 0; border: 1px solid #59636d; background: #f0f0f0; }
.menubar { display: flex; gap: 13px; height: 21px; padding: 0 7px; background: linear-gradient(#fff, #f3f5fa 35%, #d5dbed 40%, #e2e7f6); border-bottom: 1px solid #b9bdc6; }
.menubar a { color: inherit; text-decoration: none; white-space: nowrap; line-height: 18px; }

.toolrow { display: flex; height: 29px; border-bottom: 1px solid #c4c4c4; border-top: 1px solid #fafafa; }
.toolbar { display: flex; align-items: center; padding-left: 8px; position: relative; }
.toolbar::before { content: ""; align-self: stretch; width: 2px; margin: 4px 3px 3px -5px; background: repeating-linear-gradient(#b6b6b6 0 1px, transparent 1px 3px); }
.toolbar + .toolbar { border-left: 1px solid #c0c0c0; }
.toolbar button { width: 27px; height: 27px; display: grid; place-items: center; }
.toolbar button svg { width: 20px; height: 20px; }
.toolbar .drop { width: 10px; }
.drop::after { content: ""; border: 3px solid transparent; border-top: 4px solid #111; border-bottom: 0; }
.drop.dim::after { border-top-color: #6c6c6c; }
.sep { width: 1px; height: 21px; margin: 0 2px; background: #d4d4d4; }
.combo select {
  width: 132px; height: 19px; padding: 0 16px 0 19px; border: 1px solid #808080; border-radius: 3px; appearance: none;
  font: 10px/16px "Noto Sans CJK JP", sans-serif; color: #111;
  background: linear-gradient(#f3f3f3, #ebebeb 48%, #dcdcdc 52%, #d0d0d0);
}
.toolbar.combo { padding-right: 1px; }
.combo::after { content: ""; position: absolute; right: 6px; top: 12px; border: 4px solid transparent; border-top-color: #111; border-bottom: 0; }
.combo .cube { position: absolute; left: 13px; top: 8px; width: 12px; height: 12px; }

.work { display: flex; flex: 1; min-height: 0; margin-top: 1px; }
.dock { display: flex; flex-direction: column; width: 316px; padding: 0 5px 2px 1px; font-size: 10px; font-feature-settings: "palt"; }
.docktitle { display: flex; justify-content: space-between; align-items: center; height: 17px; padding-right: 2px; background: #dcdcdc; border: 1px solid #d0d0d0; border-left: 0; }
.docktitle svg { width: 8px; height: 8px; }
.tabs { display: flex; align-items: flex-end; margin-top: 1px; }
.tabs button { width: 44px; height: 17px; line-height: 16px; border: 1px solid #a0a4a8; border-bottom: 0; background: linear-gradient(#f3f3f3, #dcdcdc); }
.tabs .on { height: 18px; background: #fff; border-left: 0; }
.pane { flex: 1; min-height: 0; padding: 16px 7px 0; border: 2px solid #e6e6e9; outline: 1px solid #9a9aa2; outline-offset: -1px; background: linear-gradient(#a2a2ba, #8787a4 50px, #6b6b90 130px, #333366 210px); }
.actions { display: flex; justify-content: center; gap: 6px; margin-bottom: 16px; }
.btn { width: 64px; height: 18px; line-height: 15px; border: 1px solid #7c7c80; border-radius: 3px; background: linear-gradient(#f4f4f4, #ebebeb 48%, #dcdcdc 52%, #d0d0d0); box-shadow: inset 0 0 0 1px #fafafa; }
.primary { border-color: #3c8fb4; background: linear-gradient(#effaff, #d5f0fc); box-shadow: inset 0 0 0 1px #46cdf5; }
.card { border-radius: 3px 3px 0 0; overflow: hidden; border: 1px solid #f3f6ff; background: #d5dcf8; }
.card header { display: flex; align-items: center; gap: 3px; height: 20px; padding: 0 2px 0 6px; background: linear-gradient(90deg, #fff, #f4f7ff 30%, #c6d3f7); }
.card h2 { flex: 1; margin: 0; font-size: 10px; line-height: 16px; font-weight: 700; color: #1b4fc1; }
.cardicon { width: 14px; height: 14px; }
.fold svg { width: 15px; height: 15px; }
.cardbody { padding: 15px 19px 13px 11px; border-top: 1px solid #f3f6ff; }
.lists { display: flex; gap: 6px; padding-left: 7px; }
.col { display: flex; flex-direction: column; flex: 1; white-space: nowrap; min-width: 0; }
.col span { height: 19px; }
.list { height: 214px; margin: 0; padding: 0 3px; border: 1px solid #8c929e; background: #fff; list-style: none; font-size: 11px; }
.list li { display: flex; align-items: center; gap: 5px; height: 17px; }
.list svg { width: 13px; height: 13px; }
.moves { display: flex; flex-direction: column; gap: 6px; padding-top: 59px; }
.moves button { display: grid; place-items: center; width: 27px; height: 25px; border: 1px solid #b5b8c0; border-radius: 2px; background: #f3f3f4; }
.moves svg { width: 16px; height: 16px; }
.left { transform: rotate(180deg); }
.up { transform: rotate(-90deg); }
.down { transform: rotate(90deg); }
.path { display: block; width: 67px; margin-top: 14px; }
.checks { display: flex; gap: 8px; margin-top: 22px; }
.checks label { display: flex; align-items: center; gap: 3px; }
.checks input { appearance: none; width: 11px; height: 11px; margin: 0; border: 1px solid #8e8f8f; background: linear-gradient(135deg, #cfd3d8, #fff); box-shadow: inset 0 0 0 1px #f4f4f4; }

.mdi { display: flex; flex-direction: column; flex: 1; min-width: 0; }
.view { position: relative; flex: 1; min-height: 0; background: linear-gradient(#333366, #9696aa); }
.scene { width: 100%; height: 100%; }
.axes { position: absolute; right: 3px; bottom: 25px; width: 40px; height: 40px; font: 9px "Liberation Sans", sans-serif; }
.doctabs { display: flex; align-items: flex-start; height: 21px; padding-left: 2px; font-size: 10px; }
.doctabs button { display: flex; align-items: center; gap: 3px; height: 18px; padding: 0 9px; border: 1px solid #a0a0a8; border-top: 0; background: linear-gradient(#d4d4d4, #eee); }
.doctabs .on { height: 20px; padding: 0 11px; background: #fff; }
.doctabs svg { width: 13px; height: 13px; }
.doctabs .x { width: 12px; height: 12px; }
.status { display: flex; align-items: center; height: 27px; font: 11px/16px "Noto Sans", sans-serif; }
.msg { width: 107px; height: 22px; border-right: 2px solid #dedede; margin-right: auto; }
.dim-info { height: 22px; padding: 3px 12px 0 0; border-right: 2px solid #dedede; }
.grip { align-self: flex-end; width: 10px; height: 10px; margin: 0 2px 2px 3px; }
.annot { position: absolute; left: 0; top: 0; width: 200px; height: 600px; pointer-events: none; }
```
